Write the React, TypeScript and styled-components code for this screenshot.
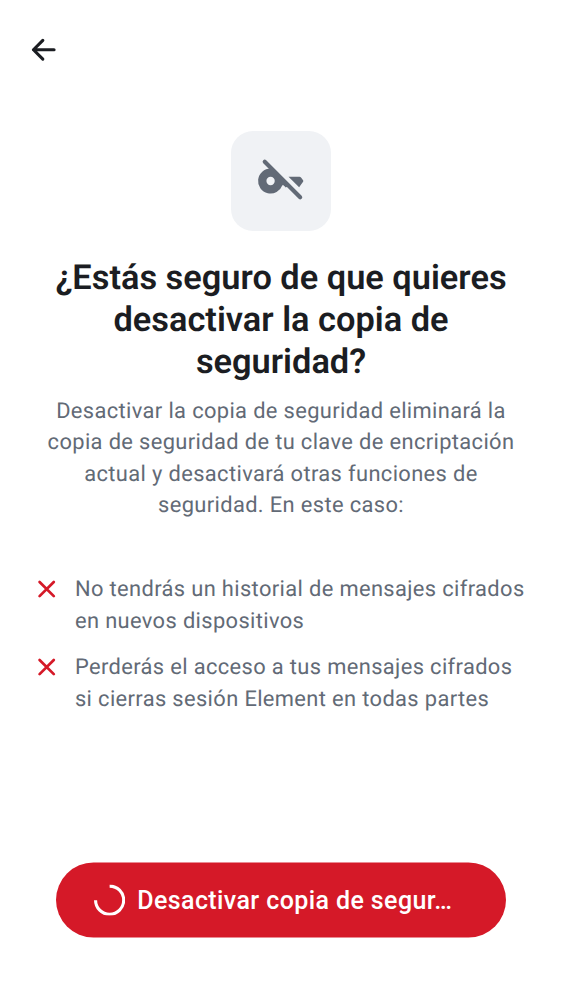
import React from 'react';
import styled, { createGlobalStyle } from 'styled-components';

const GlobalStyle = createGlobalStyle`
  body { margin: 0; background: #fff; font-family: Roboto, sans-serif; text-rendering: geometricPrecision; }
  * { box-sizing: border-box; }
`;

const Screen = styled.main`
  width: 562px;
  height: 1000px;
  background: #fff;
  display: flex;
  flex-direction: column;
  align-items: center;
`;

const TopBar = styled.header`
  align-self: stretch;
  height: 100px;
  padding-left: 25px;
  display: flex;
  align-items: center;
`;

const IconButton = styled.button`
  border: 0;
  padding: 0;
  background: none;
  color: #1b1d22;
  display: flex;
`;

const IconTile = styled.div`
  width: 100px;
  height: 100px;
  margin-top: 31px;
  border-radius: 22px;
  background: #f0f2f5;
  color: #626a76;
  display: flex;
  align-items: center;
  justify-content: center;
`;

const Title = styled.h1`
  margin: 25.5px 0 0;
  font-size: 34.375px;
  line-height: 42px;
  font-weight: 600;
  color: #1b1d22;
  text-align: center;
`;

const Line = styled.span`
  display: block;
  white-space: nowrap;
`;

const Subtitle = styled.p`
  margin: 13.6px 0 0;
  font-size: 21.875px;
  line-height: 31.25px;
  letter-spacing: 0.37px;
  color: #626a76;
  text-align: center;
`;

const Reasons = styled.ul`
  align-self: stretch;
  list-style: none;
  margin: 53.2px 0 0;
  padding: 0 0 0 31.2px;
  display: flex;
  flex-direction: column;
  gap: 15.6px;
`;

const Reason = styled.li`
  display: flex;
  gap: 12.5px;
  font-size: 21.875px;
  line-height: 31.25px;
  letter-spacing: 0.37px;
  color: #626a76;
`;

const Cross = styled.svg`
  flex: none;
  color: #d51928;
`;

const DangerButton = styled.button`
  width: 450px;
  height: 75px;
  margin-top: auto;
  margin-bottom: 63px;
  transform: translateY(0.5px);
  padding: 0 0 0 37.5px;
  border: 0;
  border-radius: 38px;
  background: #d51928;
  color: #fff;
  display: flex;
  align-items: center;
  gap: 12.5px;
  font: 500 25px Roboto, sans-serif;
  letter-spacing: 0.4px;
  white-space: nowrap;
`;

const reasons = [
  ['No tendrás un historial de mensajes cifrados', 'en nuevos dispositivos'],
  ['Perderás el acceso a tus mensajes cifrados', 'si cierras sesión Element en todas partes'],
];

const lines = (items: string[]) => items.map((t) => <Line key={t}>{t}</Line>);

export default function App() {
  return (
    <>
      <GlobalStyle />
      <Screen>
        <TopBar>
          <IconButton aria-label="Atrás">
            <svg width="37.5" height="37.5" viewBox="0 0 24 24" fill="none" stroke="currentColor" strokeWidth="2" strokeLinecap="round" strokeLinejoin="round">
              <path d="M18.6 12H5.4M11.4 6L5.4 12l6 6" />
            </svg>
          </IconButton>
        </TopBar>
        <IconTile>
          <svg width="50" height="50" viewBox="0 0 24 24" fill="currentColor">
            <path fillRule="evenodd" d="M7 6A6 6 0 1 0 12.65 14H13.2L14.3 15.1L15.5 14.4L7 6ZM7 10a2 2 0 1 1 0 4 2 2 0 0 1 0-4z" />
            <path d="M15.6 10H20.9q.4 0 .7.3l1 1.3q.25.35 0 .7L20.7 15z" />
            <path d="M4.2 2.8L21.2 19.8" stroke="currentColor" strokeWidth="2" strokeLinecap="round" />
          </svg>
        </IconTile>
        <Title>{lines(['¿Estás seguro de que quieres', 'desactivar la copia de', 'seguridad?'])}</Title>
        <Subtitle>
          {lines([
            'Desactivar la copia de seguridad eliminará la',
            'copia de seguridad de tu clave de encriptación',
            'actual y desactivará otras funciones de',
            'seguridad. En este caso:',
          ])}
        </Subtitle>
        <Reasons>
          {reasons.map((r) => (
            <Reason key={r[0]}>
              <Cross width="31.25" height="31.25" viewBox="0 0 24 24" fill="none" stroke="currentColor" strokeWidth="2.1" strokeLinecap="round">
                <path d="M6.6 6.1l10.9 10.9M17.5 6.1L6.6 17" />
              </Cross>
              <div>{lines(r)}</div>
            </Reason>
          ))}
        </Reasons>
        <DangerButton>
          <svg width="31.25" height="31.25" viewBox="0 0 32 32" fill="none" stroke="#fff" strokeWidth="3.2">
            <path d="M16 1.6A14.4 14.4 0 1 1 1.6 16" />
          </svg>
          <span>Desactivar copia de segur…</span>
        </DangerButton>
      </Screen>
    </>
  );
}
